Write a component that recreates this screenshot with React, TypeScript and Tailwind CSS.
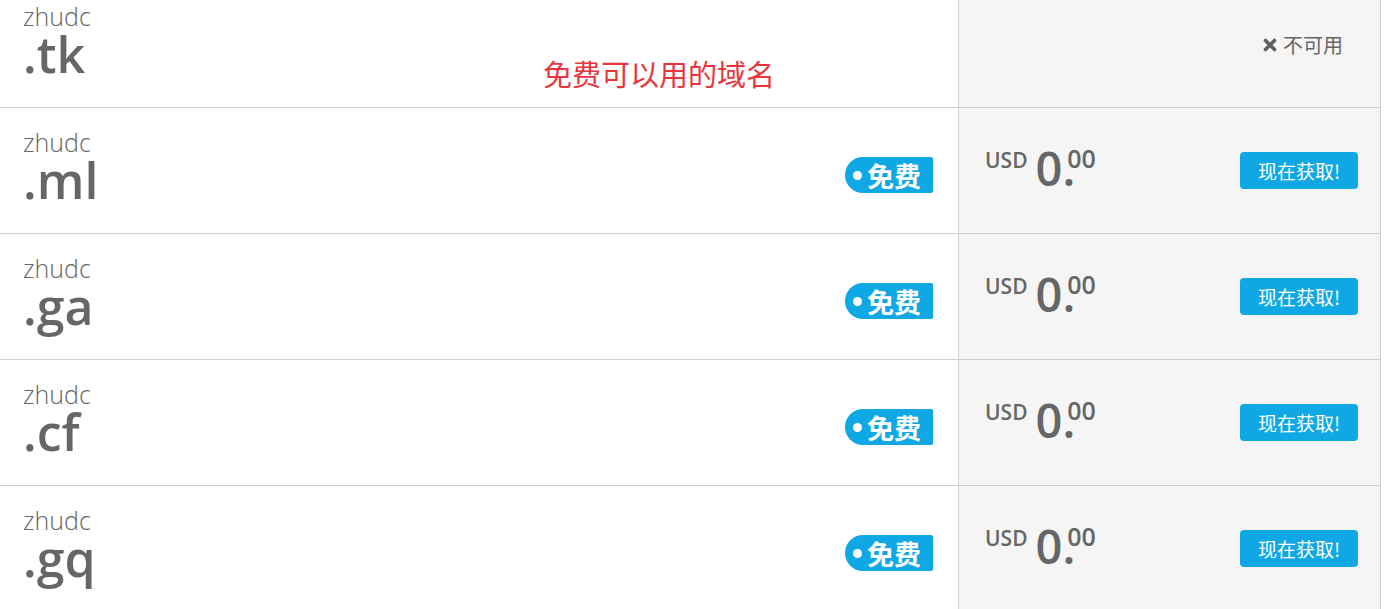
const latin = "font-['Open_Sans','Noto_Sans_CJK_SC',sans-serif]"
const cjk = "font-['Noto_Sans_CJK_SC','Open_Sans',sans-serif]"

const domains: { tld: string; free: boolean }[] = [
  { tld: '.tk', free: false },
  { tld: '.ml', free: true },
  { tld: '.ga', free: true },
  { tld: '.cf', free: true },
  { tld: '.gq', free: true },
]

function FreeTag() {
  return (
    <div className="flex items-center h-[36px] w-[88px] bg-[#0fa8e4] rounded-l-[18px] rounded-r-[2px] pl-[8px]">
      <span className="w-[9px] h-[9px] rounded-full bg-white" />
      <span className={`${cjk} ml-[5px] text-[27px] leading-none font-bold text-white`}>免费</span>
    </div>
  )
}

function Price() {
  return (
    <div className={`${latin} flex items-start text-[#666] font-semibold`}>
      <span className="text-[21px] leading-[21px] mt-[5px]">USD</span>
      <span className="text-[47px] leading-[46px] ml-[8px]">0.</span>
      <span className="text-[25px] leading-[25px] mt-[1px] -ml-[8px]">00</span>
    </div>
  )
}

export default function App() {
  return (
    <div className="w-[1384px] h-[609px] overflow-hidden bg-white">
      <div className="-mt-[18px] w-[1381px]">
        {domains.map((d, i) => (
          <div key={d.tld} className="relative flex h-[126px] border-b border-[#cfcfcf]">
            <div className="w-[959px] flex justify-between border-r border-[#cfcfcf] pl-[23px] pr-[25px]">
              <div className={`${latin} text-[#666] pt-[21px]`}>
                <div className="text-[25px] leading-[26px] font-light">zhudc</div>
                <div className="text-[50px] leading-[50px] font-semibold">{d.tld}</div>
              </div>
              {d.free && (
                <div className="self-start mt-[49px]">
                  <FreeTag />
                </div>
              )}
            </div>
            <div className="flex-1 flex items-center justify-between bg-[#f5f5f5] border-r border-[#cfcfcf] pl-[26px] pr-[22px]">
              {d.free ? (
                <>
                  <div className="self-start mt-[37px]">
                    <Price />
                  </div>
                  <button className={`${cjk} w-[118px] h-[37px] rounded-[4px] bg-[#0fa8e4] text-white text-[19px] leading-none`}>
                    现在获取!
                  </button>
                </>
              ) : (
                <div className={`${cjk} ml-auto mr-[15px] flex items-center text-[#666] text-[20px]`}>
                  <svg width="14" height="14" viewBox="0 0 14 14" className="text-[#5f5f5f]">
                    <path d="M2.5 2.5 11.5 11.5M11.5 2.5 2.5 11.5" stroke="currentColor" strokeWidth="3.6" strokeLinecap="round" fill="none" />
                  </svg>
                  <span className="ml-[6px]">不可用</span>
                </div>
              )}
            </div>
            {i === 0 && (
              <div className={`${cjk} absolute left-[543px] top-[77px] text-[29px] leading-[28px] text-[#e8363c]`}>
                免费可以用的域名
              </div>
            )}
          </div>
        ))}
      </div>
    </div>
  )
}
